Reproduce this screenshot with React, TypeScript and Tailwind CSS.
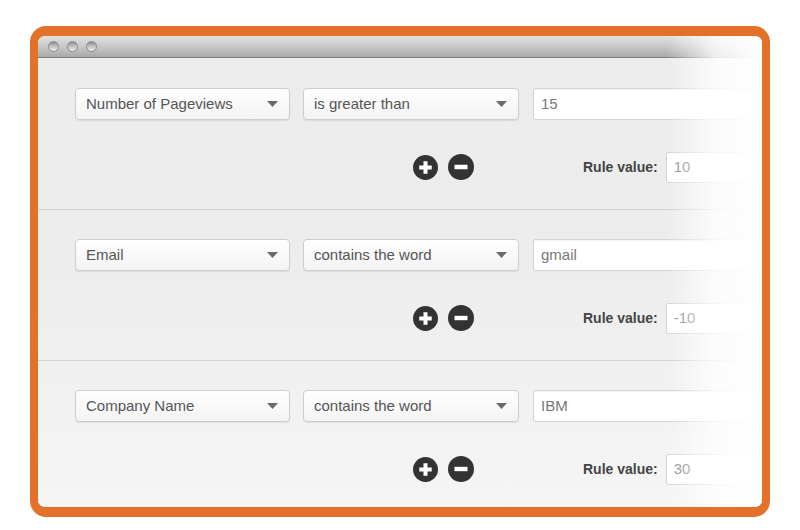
import React from "react";

type Rule = {
  field: string;
  op: string;
  value: string;
  score: string;
};

const rules: Rule[] = [
  { field: "Number of Pageviews", op: "is greater than", value: "15", score: "10" },
  { field: "Email", op: "contains the word", value: "gmail", score: "-10" },
  { field: "Company Name", op: "contains the word", value: "IBM", score: "30" },
];

const Select = ({ label, width }: { label: string; width: string }) => {
  return (
    <div
      className={`${width} h-[32px] flex items-center justify-between pl-[10px] pr-[11px] rounded-[4px] border border-[#cdcdcd] bg-gradient-to-b from-white to-[#f3f3f3] shadow-[0_1px_1px_rgba(0,0,0,0.08)]`}
    >
      <span className="text-[15px] text-[#555]">{label}</span>
      <svg width="11" height="6" viewBox="0 0 11 6">
        <path d="M0 0h11L5.5 6z" fill="#6a6a6a" />
      </svg>
    </div>
  );
};

const PlusIcon = () => (
  <svg width="25" height="25" viewBox="0 0 26 26">
    <circle cx="13" cy="13" r="13" fill="#333" />
    <path d="M13 6.5v13M6.5 13h13" stroke="#fff" strokeWidth="4.2" />
  </svg>
);

const MinusIcon = () => (
  <svg width="26" height="26" viewBox="0 0 26 26">
    <circle cx="13" cy="13" r="13" fill="#333" />
    <path d="M6.5 13h13" stroke="#fff" strokeWidth="4.4" />
  </svg>
);

const RuleRow = ({ rule, first }: { rule: Rule; first: boolean }) => {
  return (
    <div
      className={`${first ? "pt-[30px]" : "pt-[29px]"} pb-[26px] border-b border-[#d2d2d2] last:border-b-0`}
    >
      <div className="flex items-center pl-[37px]">
        <Select label={rule.field} width="w-[215px]" />
        <div className="ml-[13px]">
          <Select label={rule.op} width="w-[216px]" />
        </div>
        <div className="ml-[14px] flex-1 h-[32px] flex items-center pl-[7px] bg-white border border-[#d4d4d4] rounded-[2px] shadow-[inset_0_1px_1px_rgba(0,0,0,0.06)]">
          <span className="text-[15px] text-[#777]">{rule.value}</span>
        </div>
      </div>
      <div className="flex items-center mt-[31px] h-[32px] pl-[375px]">
        <PlusIcon />
        <div className="ml-[10px] flex">
          <MinusIcon />
        </div>
        <span className="ml-[109px] text-[14px] font-bold text-[#444]">Rule value:</span>
        <div className="ml-[8px] flex-1 h-[31px] flex items-center pl-[7px] bg-white border border-[#d4d4d4] rounded-[2px]">
          <span className="text-[15px] text-[#888]">{rule.score}</span>
        </div>
      </div>
    </div>
  );
};

const Light = () => (
  <span className="w-[11px] h-[11px] rounded-full border border-[#8a8a8a] bg-gradient-to-b from-[#8e8e8e] via-[#c4c4c4] to-[#eeeeee]" />
);

export default function App() {
  return (
    <div className="w-[800px] h-[530px] bg-white pt-[26px] pl-[30px] font-['Liberation_Sans',Arial,sans-serif]">
      <div className="w-[740px] h-[491px] border-x-[8px] border-t-[10px] border-b-[10px] border-[#e2712a] rounded-[16px] overflow-hidden">
        <div className="relative h-full rounded-[6px] overflow-hidden bg-gradient-to-b from-[#ececec] via-[#ededed] to-[#f5f5f5]">
          {/* title bar */}
          <div className="h-[22px] flex items-center gap-[8px] pl-[10px] bg-gradient-to-b from-[#e2e2e2] via-[#c8c8c8] to-[#a9a9a9] border-b border-[#7e7e7e]">
            <Light />
            <Light />
            <Light />
          </div>

          {rules.map((rule, i) => (
            <RuleRow key={rule.field} rule={rule} first={i === 0} />
          ))}

          {/* fade on the right edge */}
          <div className="absolute top-0 right-0 bottom-0 w-[95px] bg-gradient-to-r from-transparent via-[rgba(255,255,255,0.8)] to-white pointer-events-none" />
        </div>
      </div>
    </div>
  );
}
